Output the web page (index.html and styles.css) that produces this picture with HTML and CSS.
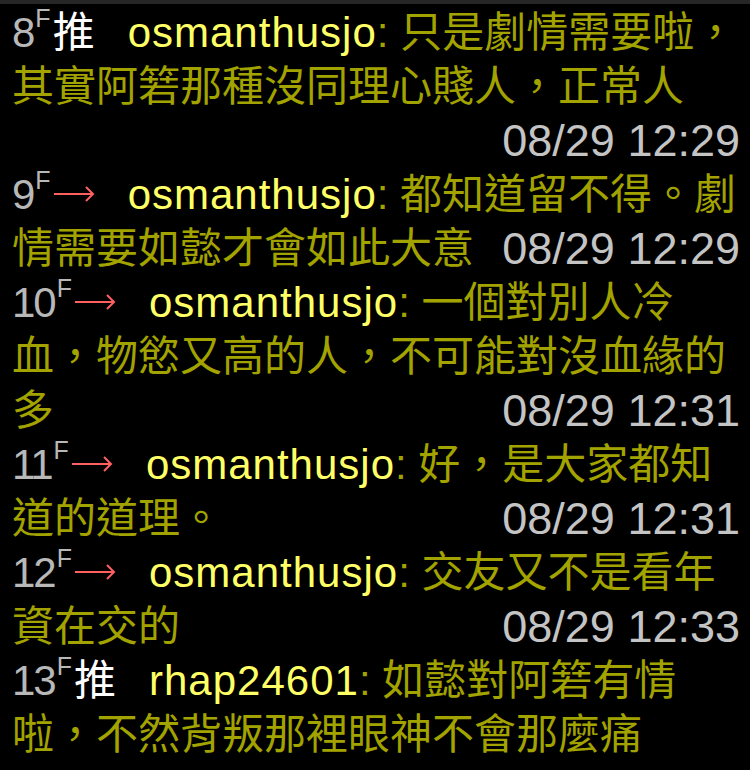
FILE: index.html
```html
<!DOCTYPE html>
<html lang="zh-Hant">
<head>
    <meta charset="UTF-8">
    <meta name="viewport" content="width=device-width, initial-scale=1.0">
    <title>推文</title>
    <link rel="stylesheet" href="styles.css">
</head>
<body>

<div class="topbar"></div>

<div class="comments">
    <div class="comment"><span class="floor">8<sup>F</sup></span><span class="tag push">推</span><span class="user">osmanthusjo</span>: 只是劇情需要啦，其實阿箬那種沒同理心賤人，正常人<span class="time">08/29 12:29</span></div>
    <div class="comment"><span class="floor">9<sup>F</sup></span><svg class="tag arrow" width="42" height="18" viewBox="0 0 42 18"><path d="M1 9H40M33 2L40 9L33 16"/></svg><span class="user">osmanthusjo</span>: 都知道留不得。劇情需要如懿才會如此大意<span class="time">08/29 12:29</span></div>
    <div class="comment"><span class="floor">10<sup>F</sup></span><svg class="tag arrow" width="42" height="18" viewBox="0 0 42 18"><path d="M1 9H40M33 2L40 9L33 16"/></svg><span class="user">osmanthusjo</span>: 一個對別人冷血，物慾又高的人，不可能對沒血緣的多<span class="time">08/29 12:31</span></div>
    <div class="comment"><span class="floor">11<sup>F</sup></span><svg class="tag arrow" width="42" height="18" viewBox="0 0 42 18"><path d="M1 9H40M33 2L40 9L33 16"/></svg><span class="user">osmanthusjo</span>: 好，是大家都知道的道理。<span class="time">08/29 12:31</span></div>
    <div class="comment"><span class="floor">12<sup>F</sup></span><svg class="tag arrow" width="42" height="18" viewBox="0 0 42 18"><path d="M1 9H40M33 2L40 9L33 16"/></svg><span class="user">osmanthusjo</span>: 交友又不是看年資在交的<span class="time">08/29 12:33</span></div>
    <div class="comment"><span class="floor">13<sup>F</sup></span><span class="tag push">推</span><span class="user">rhap24601</span>: 如懿對阿箬有情啦，不然背叛那裡眼神不會那麼痛<span class="time">08/29 12:34</span></div>
</div>

</body>
</html>
```

FILE: styles.css
```css
body {
    margin: 0;
    background-color: #000;
    font-family: "Liberation Sans", "Noto Sans CJK TC", sans-serif;
    overflow: hidden;
}
.topbar {
    height: 4px;
    background-color: #262626;
}
.comments {
    padding: 2px 10px 0 12px;
}
.comment {
    display: flow-root;
    font-size: 42px;
    line-height: 54px;
    color: #a3a300;
}
.floor {
    color: #b8b8b8;
    letter-spacing: -2px;
}
.floor sup {
    font-size: 25px;
    line-height: 0;
    letter-spacing: 0;
    vertical-align: 20px;
    margin: 0 2px;
}
.tag {
    margin-right: 33px;
}
.push {
    color: #fff;
}
.arrow {
    vertical-align: 6px;
    fill: none;
    stroke: #ff6060;
    stroke-width: 2;
}
.user {
    color: #ffff66;
    letter-spacing: 1px;
}
.time {
    float: right;
    font-size: 45px;
    color: #c4c4c4;
}
```
